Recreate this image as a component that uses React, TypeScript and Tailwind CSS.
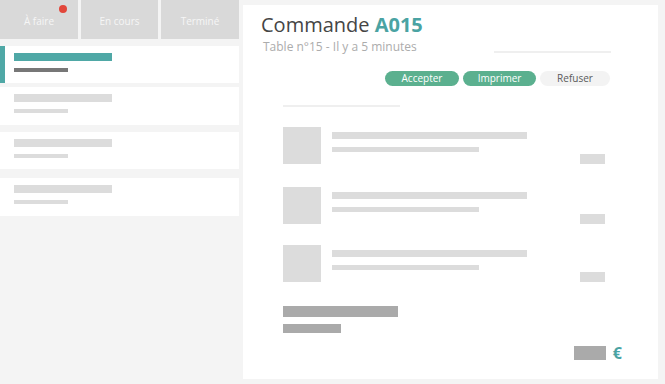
import React from 'react';

const tabs = [
    { label: 'À faire', w: 'w-[78px]', dot: true },
    { label: 'En cours', w: 'w-[77px]', dot: false },
    { label: 'Terminé', w: 'w-[78px]', dot: false },
];

const orders = [
    { active: true, mt: 'mt-[7px]', h: 'h-[37px]' },
    { active: false, mt: 'mt-[4px]', h: 'h-[38px]' },
    { active: false, mt: 'mt-[7px]', h: 'h-[37px]' },
    { active: false, mt: 'mt-[9px]', h: 'h-[38px]' },
];

const lines = [
    { mt: 'mt-[20px]' },
    { mt: 'mt-[23px]' },
    { mt: 'mt-[21px]' },
];

export default function App() {
    return (
        <div className="w-[665px] h-[384px] bg-[#f4f4f4] flex overflow-hidden" style={{ fontFamily: '"Open Sans", "Noto Sans", sans-serif' }}>
            {/* sidebar */}
            <aside className="w-[239px] flex flex-col">
                <div className="h-[39px] flex gap-[3px]">
                    {tabs.map((t) => (
                        <div key={t.label} className={`${t.w} relative bg-[#d9d9d9] flex items-center justify-center pt-[3px] text-[10px] text-[#f6f6f6]`}>
                            {t.label}
                            {t.dot && <span className="absolute left-[59px] top-[5px] w-[8px] h-[8px] rounded-full bg-[#e2463a]" />}
                        </div>
                    ))}
                </div>
                {orders.map((o, i) => (
                    <div key={i} className={`${o.mt} ${o.h} bg-white relative flex flex-col pl-[14px] pt-[7px]`}>
                        {o.active && <span className="absolute left-0 top-0 bottom-0 w-[5px] bg-[#4fa8a6]" />}
                        <div className={`w-[98px] h-[8px] ${o.active ? 'bg-[#4fa8a6]' : 'bg-[#dcdcdc]'}`} />
                        <div className={`w-[54px] h-[4px] mt-[7px] ${o.active ? 'bg-[#777777]' : 'bg-[#dcdcdc]'}`} />
                    </div>
                ))}
            </aside>

            {/* order detail */}
            <main className="ml-[4px] mt-[5px] w-[415px] h-[374px] bg-white flex flex-col">
                <div className="flex pl-[18px] pt-[6px]">
                    <div className="flex flex-col">
                        <h1 className="text-[20px] leading-[28px] text-[#454545]">
                            Commande <span className="font-bold text-[#4aa3a3]">A015</span>
                        </h1>
                        <p className="ml-[2px] text-[12px] leading-[16px] text-[#acacac]">Table n°15 - Il y a 5 minutes</p>
                    </div>
                    <div className="ml-auto mr-[47px] mt-[40px] w-[117px] h-[2px] bg-[#efefef]" />
                </div>

                <div className="flex justify-end gap-[4px] mt-[16px] mr-[48px] text-[10px] leading-[15px]">
                    <button className="w-[74px] h-[15px] rounded-full bg-[#5bb08f] text-white">Accepter</button>
                    <button className="w-[73px] h-[15px] rounded-full bg-[#5bb08f] text-white">Imprimer</button>
                    <button className="w-[70px] h-[15px] rounded-full bg-[#f3f3f3] text-[#5a5a5a]">Refuser</button>
                </div>

                <div className="ml-[40px] mt-[19px] w-[117px] h-[2px] bg-[#efefef]" />

                {lines.map((l, i) => (
                    <div key={i} className={`${l.mt} flex pl-[40px] pr-[53px]`}>
                        <div className="w-[38px] h-[37px] bg-[#dcdcdc]" />
                        <div className="ml-[11px] pt-[5px] flex flex-col">
                            <div className="w-[195px] h-[7px] bg-[#dcdcdc]" />
                            <div className="mt-[8px] w-[147px] h-[5px] bg-[#dcdcdc]" />
                        </div>
                        <div className="ml-auto mt-[27px] w-[25px] h-[10px] bg-[#dcdcdc]" />
                    </div>
                ))}

                <div className="ml-[40px] mt-[24px] w-[115px] h-[11px] bg-[#aaaaaa]" />
                <div className="ml-[40px] mt-[7px] w-[58px] h-[9px] bg-[#aaaaaa]" />

                <div className="flex items-center justify-end mt-[12px] mr-[36px]">
                    <div className="w-[32px] h-[14px] bg-[#aaaaaa]" />
                    <span className="ml-[7px] text-[16px] leading-[16px] font-bold text-[#4aa3a3]">€</span>
                </div>
            </main>
        </div>
    );
}
